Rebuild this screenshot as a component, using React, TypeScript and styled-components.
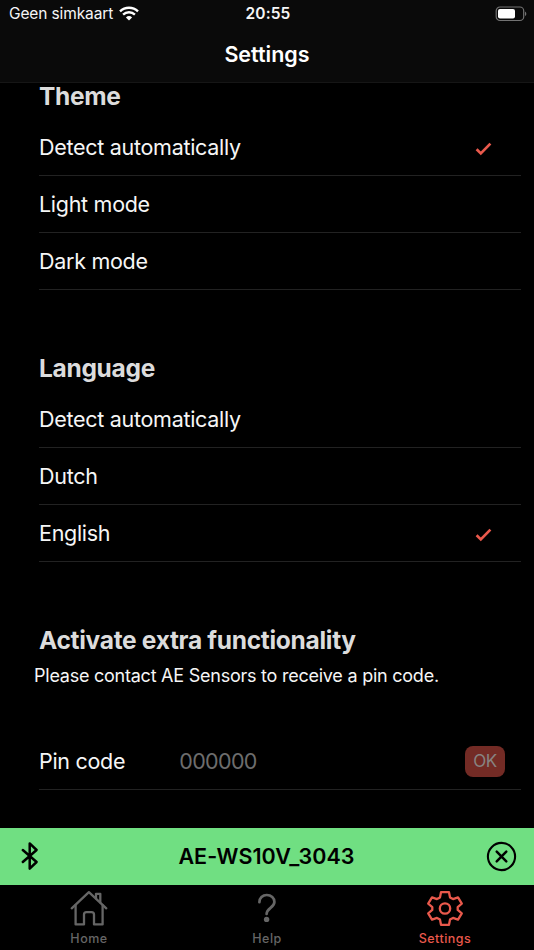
import React from "react";
import styled, { createGlobalStyle } from "styled-components";

const GlobalStyle = createGlobalStyle`
  * { box-sizing: border-box; }
  body { margin: 0; background: #000; }
`;

const Screen = styled.div`
  width: 534px;
  height: 950px;
  display: flex;
  flex-direction: column;
  overflow: hidden;
  background: #000;
  color: #f6f6f6;
  font-family: Inter, "Liberation Sans", sans-serif;
  white-space: nowrap;
`;

const Header = styled.header`
  flex: none;
  height: 83px;
  background: #0a0a0a;
  border-bottom: 1px solid #161616;
`;

const StatusBar = styled.div`
  height: 27px;
  padding: 0 7px 0 9px;
  display: grid;
  grid-template-columns: 1fr auto 1fr;
  align-items: center;
`;

const Carrier = styled.div`
  display: flex;
  align-items: center;
  gap: 6px;
  font-size: 15.5px;
  letter-spacing: -0.12px;
`;

const Clock = styled.time`
  font-size: 15.5px;
  font-weight: 600;
  letter-spacing: 0.1px;
`;

const BatterySlot = styled.div`
  display: flex;
  justify-content: flex-end;
`;

const Title = styled.h1`
  margin: 0;
  height: 54px;
  line-height: 54px;
  text-align: center;
  font-size: 21.5px;
  font-weight: 600;
  color: #fff;
`;

const Content = styled.main`
  flex: 1;
  min-height: 0;
  padding: 0 13px 0 39px;
`;

const Section = styled.section<{ $top: number }>`
  padding-top: ${(p) => p.$top}px;
`;

const Heading = styled.h2`
  margin: 0 0 8px;
  height: 28px;
  line-height: 26px;
  font-size: 24.5px;
  font-weight: 700;
  letter-spacing: -0.3px;
  color: #dcdcdc;
`;

const Row = styled.div`
  height: 57px;
  display: flex;
  align-items: center;
  border-bottom: 1px solid #222;
  font-size: 21.5px;
  letter-spacing: -0.29px;
`;

const CheckSlot = styled.span`
  display: flex;
  margin: 3px 29px 0 auto;
`;

const Hint = styled.p`
  margin: 0 0 44px -5px;
  height: 26px;
  line-height: 26px;
  font-size: 18px;
  letter-spacing: -0.24px;
`;

const PinValue = styled.span`
  margin-left: 54px;
  color: #6d6d6d;
  letter-spacing: -0.65px;
`;

const OkButton = styled.button`
  margin: 0 16px 0 auto;
  width: 40px;
  height: 31px;
  padding: 0;
  border: 0;
  border-radius: 8px;
  background: #732b25;
  color: #878381;
  font: 400 17px Inter, sans-serif;
  letter-spacing: -0.4px;
`;

const DeviceBar = styled.div`
  flex: none;
  height: 57px;
  padding: 0 17px 1px 21px;
  display: grid;
  grid-template-columns: 31px 1fr 31px;
  align-items: center;
  background: #70df82;
  color: #000;
`;

const DeviceName = styled.div`
  padding-right: 5px;
  text-align: center;
  font-size: 21.5px;
  font-weight: 600;
  letter-spacing: 0.05px;
`;

const TabBar = styled.nav`
  flex: none;
  height: 65px;
  display: grid;
  grid-template-columns: repeat(3, 1fr);
`;

const Tab = styled.div<{ $active?: boolean }>`
  display: flex;
  flex-direction: column;
  align-items: center;
  padding-top: 5px;
  color: ${(p) => (p.$active ? "#e9594c" : "#666")};
`;

const TabLabel = styled.span`
  margin-top: 3px;
  line-height: 16px;
  font-size: 12.5px;
  font-weight: 500;
  letter-spacing: 0.5px;
`;

const WifiIcon = () => (
  <svg width="20" height="15" viewBox="0 0 20 15" fill="none" stroke="#fff" strokeWidth="2.4">
    <path d="M1 5.3A13 13 0 0 1 19 5.3" />
    <path d="M4.1 8.7A8.5 8.5 0 0 1 15.9 8.7" />
    <path d="M10 14.5L6.9 11.4A4.5 4.5 0 0 1 13.1 11.4Z" fill="#fff" stroke="none" />
  </svg>
);

const BatteryIcon = () => (
  <svg width="32" height="16" viewBox="0 0 32 16">
    <rect x="1.2" y="1" width="27.5" height="13.5" rx="3.8" fill="none" stroke="#737373" strokeWidth="1.2" />
    <rect x="3" y="3" width="17" height="9.5" rx="2" fill="#fff" />
    <path d="M30 5.4C31.8 6.2 31.8 9.3 30 10.1Z" fill="#737373" />
  </svg>
);

const CheckIcon = () => (
  <svg width="17" height="14" viewBox="0 0 17 14" fill="none" stroke="#e9594c" strokeWidth="2.7">
    <path d="M1.6 7.3L5.8 11.4L15.4 1.6" />
  </svg>
);

const BluetoothIcon = () => (
  <svg width="18" height="30" viewBox="0 0 18 30" fill="none" stroke="#000" strokeWidth="2.5" strokeLinecap="round" strokeLinejoin="round">
    <path d="M1.8 9L15.6 21L8.7 27.6V2.4L15.6 9L1.8 21" />
  </svg>
);

const CloseIcon = () => (
  <svg width="31" height="31" viewBox="0 0 31 31" fill="none" stroke="#000" strokeWidth="2.1" strokeLinecap="round">
    <circle cx="15.5" cy="15.5" r="13.6" />
    <path d="M10.7 10.7L20.3 20.3M20.3 10.7L10.7 20.3" strokeWidth="2.5" />
  </svg>
);

const HomeIcon = () => (
  <svg width="38" height="38" viewBox="0 0 38 38" fill="none" stroke="currentColor" strokeWidth="2.3" strokeLinecap="round" strokeLinejoin="round">
    <path d="M1.7 18.3L18.9 2.2L36.3 18.3" />
    <path d="M26 8.4V3.8H30.3V12.6" />
    <path d="M5.6 15.2V34.4H14V24.6Q14 22.1 16.5 22.1H21.5Q24 22.1 24 24.6V34.4H32.6V15.2" />
  </svg>
);

const HelpIcon = () => (
  <svg width="38" height="38" viewBox="0 0 38 38" fill="none" stroke="currentColor" strokeWidth="2.7" strokeLinecap="round">
    <path d="M11.4 12.2C11.4 8 14.6 5 18.8 5C23.2 5 26.4 8 26.4 12C26.4 17.6 18.6 18.2 18.6 24" />
    <circle cx="18.6" cy="29.4" r="2.7" fill="currentColor" stroke="none" />
  </svg>
);

const GearIcon = () => (
  <svg width="38" height="38" viewBox="0 0 38 38" fill="none" stroke="currentColor" strokeWidth="2.3" strokeLinejoin="round">
    <circle cx="19" cy="18.5" r="5.2" />
    <path d="M15 2.2H23L24 7.4L27 9.1L32 7.3L35.8 13.7L31.7 17.1V19.9L35.8 23.3L32 29.7L27 27.9L24 29.6L23 34.8H15L14 29.6L11 27.9L6 29.7L2.2 23.3L6.3 19.9V17.1L2.2 13.7L6 7.3L11 9.1L14 7.4Z" />
  </svg>
);

interface OptionProps {
  label: string;
  selected?: boolean;
}

const Option = ({ label, selected }: OptionProps) => (
  <Row>
    <span>{label}</span>
    {selected && (
      <CheckSlot>
        <CheckIcon />
      </CheckSlot>
    )}
  </Row>
);

export default function App() {
  return (
    <Screen>
      <GlobalStyle />
      <Header>
        <StatusBar>
          <Carrier>
            Geen simkaart
            <WifiIcon />
          </Carrier>
          <Clock>20:55</Clock>
          <BatterySlot>
            <BatteryIcon />
          </BatterySlot>
        </StatusBar>
        <Title>Settings</Title>
      </Header>
      <Content>
        <Section $top={0}>
          <Heading>Theme</Heading>
          <Option label="Detect automatically" selected />
          <Option label="Light mode" />
          <Option label="Dark mode" />
        </Section>
        <Section $top={65}>
          <Heading>Language</Heading>
          <Option label="Detect automatically" />
          <Option label="Dutch" />
          <Option label="English" selected />
        </Section>
        <Section $top={65}>
          <Heading>Activate extra functionality</Heading>
          <Hint>Please contact AE Sensors to receive a pin code.</Hint>
          <Row>
            <span>Pin code</span>
            <PinValue>000000</PinValue>
            <OkButton>OK</OkButton>
          </Row>
        </Section>
      </Content>
      <DeviceBar>
        <BluetoothIcon />
        <DeviceName>AE-WS10V_3043</DeviceName>
        <CloseIcon />
      </DeviceBar>
      <TabBar>
        <Tab>
          <HomeIcon />
          <TabLabel>Home</TabLabel>
        </Tab>
        <Tab>
          <HelpIcon />
          <TabLabel>Help</TabLabel>
        </Tab>
        <Tab $active>
          <GearIcon />
          <TabLabel>Settings</TabLabel>
        </Tab>
      </TabBar>
    </Screen>
  );
}
